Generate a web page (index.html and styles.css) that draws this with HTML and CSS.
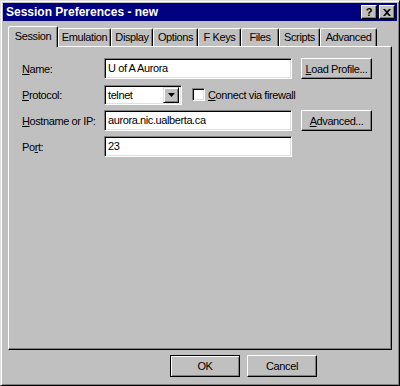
FILE: index.html
```html
<!DOCTYPE html>
<html>
<head>
<meta charset="UTF-8">
<link rel="stylesheet" href="styles.css">
</head>
<body>
<div class="window">
	<div class="titlebar">
		<span class="caption">Session Preferences - new</span>
		<div class="capbtns">
			<span class="capbtn">?</span>
			<span class="capbtn close">
				<svg width="8" height="7" viewBox="0 0 8 7"><path d="M0 0h2l2 2 2-2h2L5 3.5 8 7H6L4 5 2 7H0l3-3.5z" fill="#000"/></svg>
			</span>
		</div>
	</div>

	<div class="tabs">
		<div class="tab sel">Session</div>
		<div class="tab">Emulation</div>
		<div class="tab">Display</div>
		<div class="tab">Options</div>
		<div class="tab">F Keys</div>
		<div class="tab">Files</div>
		<div class="tab">Scripts</div>
		<div class="tab">Advanced</div>
	</div>

	<div class="panel">
		<div class="row">
			<label class="lbl"><u>N</u>ame:</label>
			<div class="field">U of A Aurora</div>
			<div class="btn side"><u>L</u>oad Profile...</div>
		</div>
		<div class="row">
			<label class="lbl"><u>P</u>rotocol:</label>
			<div class="combo">
				<span class="combo-text">telnet</span>
				<span class="drop"><svg width="7" height="4" viewBox="0 0 7 4"><path d="M0 0h7L3.5 4z" fill="#000"/></svg></span>
			</div>
			<span class="check"></span>
			<span class="checklbl"><u>C</u>onnect via firewall</span>
		</div>
		<div class="row">
			<label class="lbl"><u>H</u>ostname or IP:</label>
			<div class="field">aurora.nic.ualberta.ca</div>
			<div class="btn side"><u>A</u>dvanced...</div>
		</div>
		<div class="row">
			<label class="lbl">Po<u>r</u>t:</label>
			<div class="field">23</div>
		</div>
	</div>

	<div class="footer">
		<div class="btn dlg def">OK</div>
		<div class="btn dlg">Cancel</div>
	</div>
</div>
</body>
</html>
```

FILE: styles.css
```css
body{
	margin:0;
	background:#C0C0C0;
	font-family:"Liberation Sans", Arial, sans-serif;
	font-size:11px;
	letter-spacing:-0.4px;
	color:#000;
}
.window{
	width:400px;
	height:386px;
	box-sizing:border-box;
	background:#C0C0C0;
	border:1px solid;
	border-color:#DFDFDF #000 #000 #DFDFDF;
	box-shadow:inset 1px 1px #FFF, inset -1px -1px #808080;
	padding:2px;
}
.titlebar{
	height:18px;
	background:#000080;
	display:flex;
	align-items:center;
	justify-content:space-between;
	padding:0 2px 0 3px;
}
.caption{
	color:#FFF;
	font-weight:bold;
	font-size:12px;
	letter-spacing:0;
}
.capbtns{
	display:flex;
	gap:2px;
}
.capbtn{
	width:16px;
	height:14px;
	box-sizing:border-box;
	background:#C0C0C0;
	border:1px solid;
	border-color:#FFF #000 #000 #FFF;
	box-shadow:inset -1px -1px #808080;
	display:flex;
	align-items:center;
	justify-content:center;
	font-weight:bold;
	font-size:11px;
	line-height:1;
}
.tabs{
	display:flex;
	align-items:flex-end;
	height:20px;
	margin:5px 0 0 5px;
	position:relative;
	z-index:1;
}
.tab{
	height:18px;
	box-sizing:border-box;
	padding:2px 0 0;
	text-align:center;
	border:1px solid;
	border-bottom:none;
	border-color:#FFF #000 transparent #FFF;
	border-radius:2px 2px 0 0;
	box-shadow:inset -1px 0 #808080;
	white-space:nowrap;
}
.tab.sel{
	height:21px;
	margin-bottom:-1px;
	padding-top:3px;
	background:#C0C0C0;
}
.tab:nth-child(1){ width:50px; }
.tab:nth-child(2){ width:53px; }
.tab:nth-child(3){ width:42px; }
.tab:nth-child(4){ width:45px; }
.tab:nth-child(5){ width:43px; }
.tab:nth-child(6){ width:38px; }
.tab:nth-child(7){ width:41px; }
.tab:nth-child(8){ width:57px; }
.panel{
	height:304px;
	box-sizing:border-box;
	margin:0 5px;
	border:1px solid;
	border-color:#FFF #000 #000 #FFF;
	box-shadow:inset -1px -1px #808080;
	padding:11px 0 0 13px;
	display:flex;
	flex-direction:column;
	gap:5px;
}
.row{
	display:flex;
	align-items:center;
	height:21px;
}
.lbl{
	width:82px;
	flex:none;
}
.field{
	width:188px;
	height:21px;
	box-sizing:border-box;
	background:#FFF;
	border:1px solid;
	border-color:#808080 #FFF #FFF #808080;
	box-shadow:inset 1px 1px #000, inset -1px -1px #DFDFDF;
	padding:3px 0 0 3px;
	margin-right:9px;
}
.btn{
	height:21px;
	box-sizing:border-box;
	background:#C0C0C0;
	border:1px solid;
	border-color:#FFF #000 #000 #FFF;
	box-shadow:inset -1px -1px #808080;
	display:flex;
	align-items:center;
	justify-content:center;
}
.btn.side{
	width:71px;
}
.combo{
	width:78px;
	height:20px;
	box-sizing:border-box;
	background:#FFF;
	border:1px solid;
	border-color:#808080 #FFF #FFF #808080;
	box-shadow:inset 1px 1px #000, inset -1px -1px #DFDFDF;
	display:flex;
	align-items:center;
	padding:2px;
}
.combo-text{
	flex:1;
	padding-left:1px;
}
.drop{
	width:16px;
	height:16px;
	box-sizing:border-box;
	background:#C0C0C0;
	border:1px solid;
	border-color:#DFDFDF #000 #000 #DFDFDF;
	box-shadow:inset 1px 1px #FFF, inset -1px -1px #808080;
	display:flex;
	align-items:center;
	justify-content:center;
}
.check{
	width:13px;
	height:13px;
	box-sizing:border-box;
	background:#FFF;
	border:1px solid;
	border-color:#808080 #FFF #FFF #808080;
	box-shadow:inset 1px 1px #000, inset -1px -1px #DFDFDF;
	margin:0 3px 0 10px;
}
.footer{
	display:flex;
	gap:7px;
	margin:5px 0 0 167px;
}
.btn.dlg{
	width:70px;
	height:22px;
}
.btn.def{
	border:1px solid #000;
	box-shadow:inset 1px 1px #FFF, inset -1px -1px #808080;
}
```
